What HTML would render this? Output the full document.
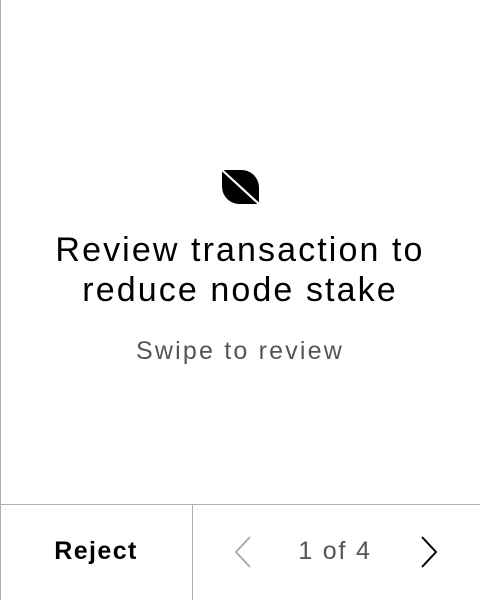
<!DOCTYPE html>
<html><head><style>
body{margin:0;width:480px;height:600px;background:#fff;font-family:"Liberation Sans",sans-serif;position:relative;overflow:hidden}
.l{position:absolute;left:0;top:0;width:1px;height:600px;background:#b0b0b0}
.h{position:absolute;left:0;top:504px;width:480px;height:1px;background:#b0b0b0}
.v{position:absolute;left:192px;top:504px;width:1px;height:96px;background:#b0b0b0}
.t{position:absolute;left:0;width:480px;text-align:center;color:#000}
</style></head><body>
<div class="l"></div>
<svg style="position:absolute;left:220px;top:168px" width="42" height="38" viewBox="0 0 42 38">
<path d="M2 2 L21 2 A17.5 17.5 0 0 1 39 19 L39 36 L21 36 A17.5 17.5 0 0 1 2 19 Z" fill="#000"/>
<line x1="2" y1="2" x2="39" y2="36" stroke="#fff" stroke-width="2.2"/>
</svg>
<div class="t" style="top:230px;font-size:34px;line-height:40px;letter-spacing:2.1px">Review transaction to<br>reduce node stake</div>
<div class="t" style="top:337px;font-size:25px;color:#555;letter-spacing:2.2px">Swipe to review</div>
<div class="h"></div><div class="v"></div>
<div style="position:absolute;left:0;width:192px;top:537px;text-align:center;font-size:25px;font-weight:bold;letter-spacing:1.4px">Reject</div>
<svg style="position:absolute;left:232px;top:535px" width="22" height="34"><path d="M18 2 L4 17 L18 32" fill="none" stroke="#aaa" stroke-width="2"/></svg>
<div style="position:absolute;left:290px;width:90px;top:537px;text-align:center;font-size:25px;color:#555;letter-spacing:1.8px">1 of 4</div>
<svg style="position:absolute;left:418px;top:535px" width="22" height="34"><path d="M4 2 L18 17 L4 32" fill="none" stroke="#000" stroke-width="2"/></svg>
</body></html>
